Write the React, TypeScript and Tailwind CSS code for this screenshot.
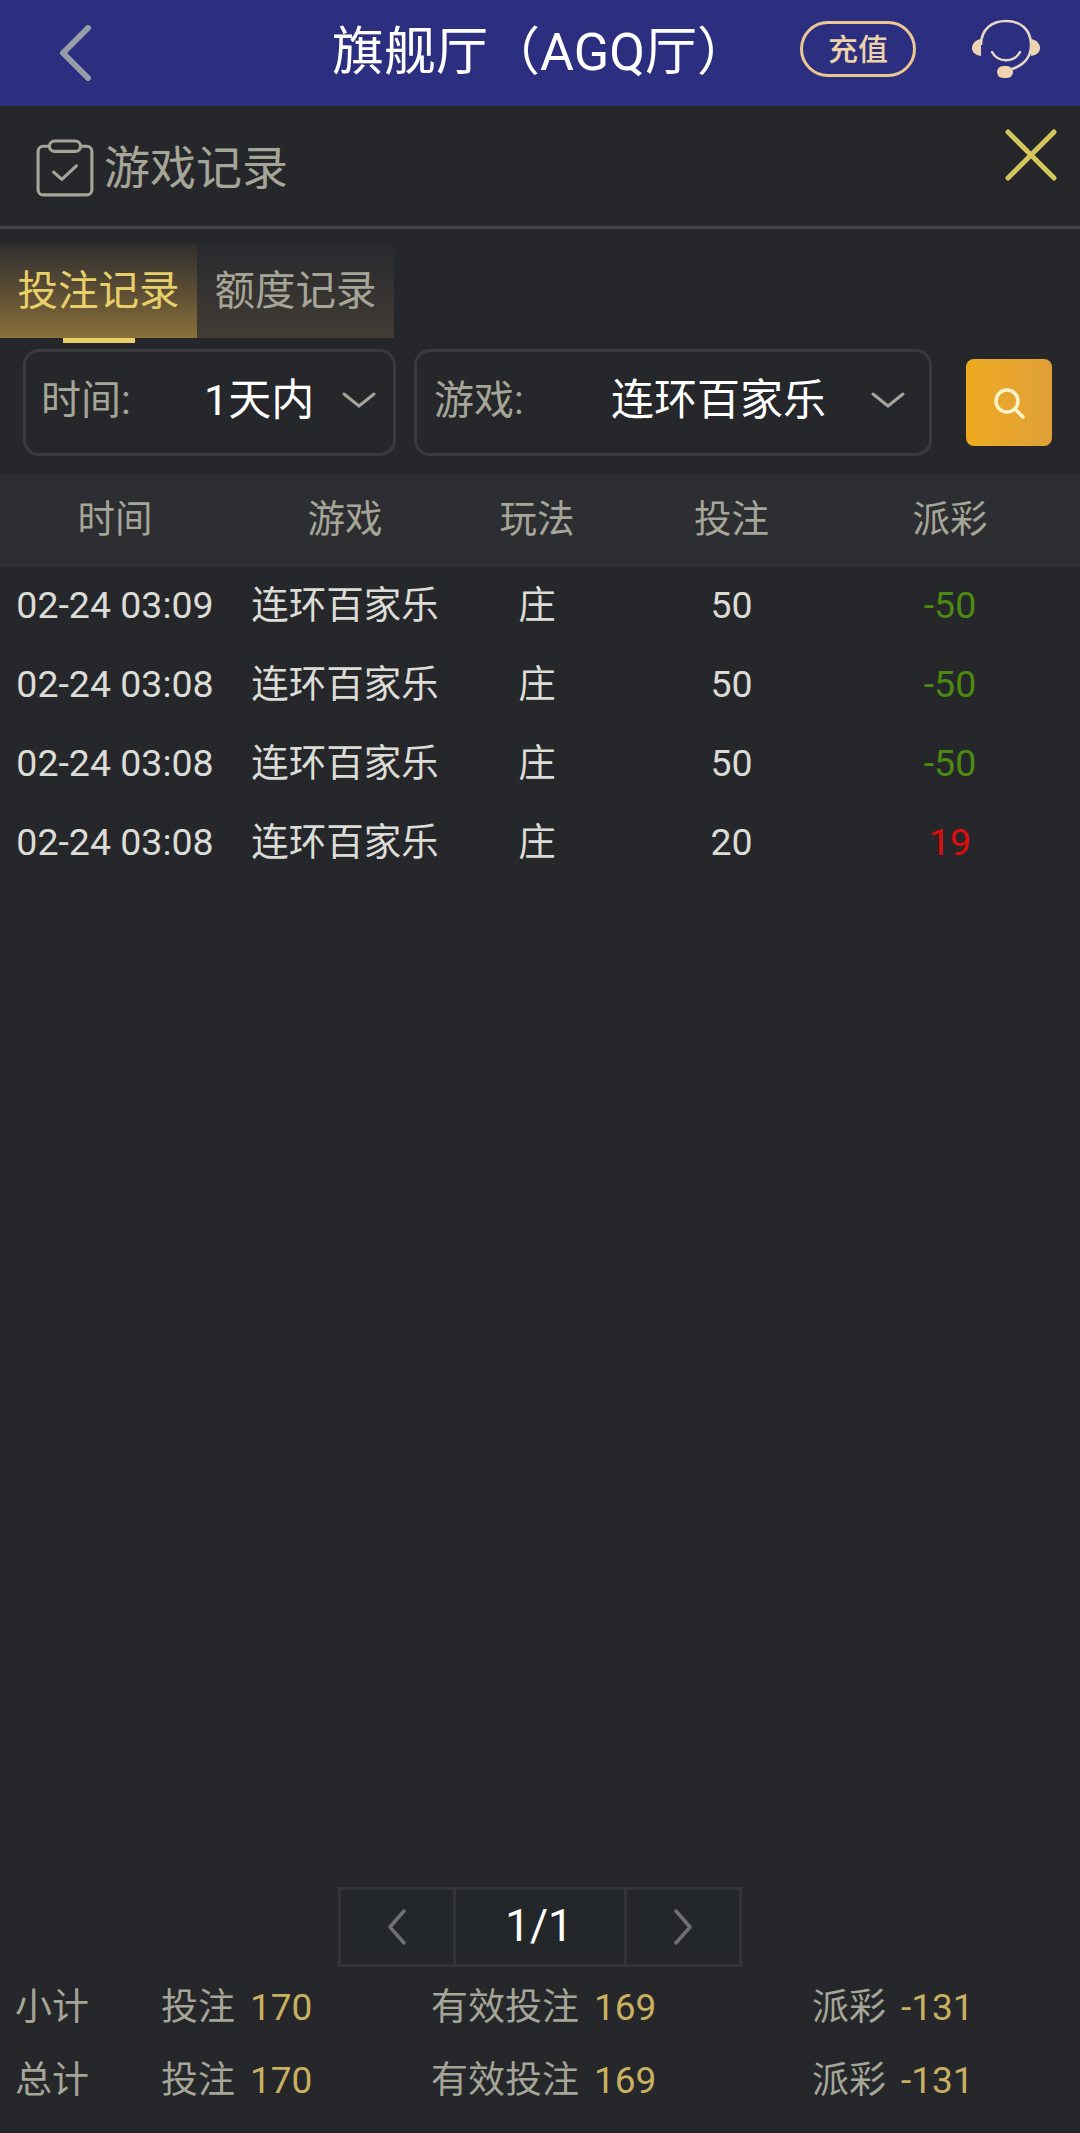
import React from "react";

const rows = [
  { time: "02-24 03:09", bet: "50", payout: "-50", win: false },
  { time: "02-24 03:08", bet: "50", payout: "-50", win: false },
  { time: "02-24 03:08", bet: "50", payout: "-50", win: false },
  { time: "02-24 03:08", bet: "20", payout: "19", win: true },
];

const cols = "grid grid-cols-[230px_230px_154px_235px_202px]";

const totals = ["小计", "总计"];

const Chevron = () => (
  <svg width="36" height="20" viewBox="0 0 36 20" fill="none" stroke="#a5a598" strokeWidth="3" strokeLinecap="round">
    <path d="M3 3 L18 15 L33 3" />
  </svg>
);

const Select = ({ label, value, width, gap }: { label: string; value: string; width: string; gap: string }) => (
  <div className={`flex items-center h-[107px] pb-[4px] border-[3px] border-[#3a3b3e] rounded-[16px] ${width}`}>
    <span className={`text-[40px] text-[#a5a598] ${gap}`}>{label}</span>
    <span className="text-[43px] text-white">{value}</span>
  </div>
);

export default function App() {
  return (
    <div className="flex flex-col w-[1080px] h-[2133px] bg-[#26272b] font-['Roboto','Noto_Sans_CJK_SC',sans-serif] overflow-hidden">
      {/* top bar */}
      <div className="relative flex items-center justify-center h-[106px] bg-[#2c2f80]">
        <svg className="absolute left-[59px] top-[25px]" width="34" height="56" viewBox="0 0 34 56" fill="none" stroke="#969ca8" strokeWidth="6" strokeLinecap="round" strokeLinejoin="round">
          <path d="M29 3 L4 28 L29 53" />
        </svg>
        <span className="text-[52px] leading-none text-white mr-[-1px]">旗舰厅（AGQ厅）</span>
        <div className="absolute left-[800px] top-[21px] flex items-center justify-center w-[116px] h-[56px] rounded-full border-[3px] border-[#edc793] text-[30px] font-medium text-[#eed3a8]">
          充值
        </div>
        <svg className="absolute left-[972px] top-[19px]" width="68" height="62" viewBox="0 0 68 62" fill="none">
          <path d="M9 26 C9 10 20 2 34 2 C48 2 59 10 59 26 C59 38 52 46 40 50" stroke="#e8d8c8" strokeWidth="2.5" />
          <path d="M20 33 C26 44 42 44 48 33" stroke="#e8d8c8" strokeWidth="2.5" strokeLinecap="round" />
          <path d="M9 20 C3 21 0 25 0 29 C0 33 3 36 9 37 Z" fill="#edd3ae" />
          <path d="M59 20 C65 21 68 25 68 29 C68 33 65 36 59 37 Z" fill="#edd3ae" />
          <rect x="25" y="47" width="16" height="12" rx="6" fill="#edd3ae" />
        </svg>
      </div>

      {/* title */}
      <div className="relative flex items-center h-[123px] pl-[36px] pt-[4px] border-b-[3px] border-[#434447]">
        <svg width="59" height="59" viewBox="0 0 57 57" fill="none" stroke="#a5a598" strokeWidth="3">
          <rect x="2" y="7" width="52" height="47" rx="5" />
          <rect x="13" y="2" width="30" height="10" rx="5" fill="#26272b" />
          <path d="M17 32 L25 39 L39 26" strokeLinecap="round" strokeLinejoin="round" />
        </svg>
        <span className="ml-[9px] text-[46px] text-[#a5a598]">游戏记录</span>
        <svg className="absolute left-[1004px] top-[22px]" width="54" height="54" viewBox="0 0 54 54" fill="none" stroke="#d4c65c" strokeWidth="5" strokeLinecap="round">
          <path d="M4 4 L50 50 M50 4 L4 50" />
        </svg>
      </div>

      {/* tabs */}
      <div className="flex mt-[14px] h-[95px]">
        <div className="relative flex items-center justify-center w-[197px] pt-[2px] bg-gradient-to-b from-[#2f2d2c] to-[#8a6f38] text-[40.5px] text-[#e8cf6a]">
          投注记录
          <div className="absolute left-[63px] top-[95px] w-[72px] h-[5px] bg-[#e8cf6a]" />
        </div>
        <div className="flex items-center justify-center w-[197px] pt-[2px] bg-gradient-to-b from-[#28292d] to-[#423c35] text-[40.5px] text-[#a5a598]">
          额度记录
        </div>
      </div>

      {/* filters */}
      <div className="flex items-center mt-[11px] pl-[23px] h-[107px]">
        <div className="relative">
          <Select label="时间:" value="1天内" width="w-[373px]" gap="ml-[15px] w-[163px]" />
          <div className="absolute left-[318px] top-[42px]"><Chevron /></div>
        </div>
        <div className="relative ml-[18px]">
          <Select label="游戏:" value="连环百家乐" width="w-[518px]" gap="ml-[17px] w-[177px]" />
          <div className="absolute left-[456px] top-[42px]"><Chevron /></div>
        </div>
        <div className="flex items-center justify-center ml-[34px] w-[86px] h-[87px] rounded-[8px] bg-gradient-to-r from-[#eeaa1e] to-[#e0a038]">
          <svg width="34" height="34" viewBox="0 0 34 34" fill="none" stroke="#fdf3c8" strokeWidth="3.5" strokeLinecap="round">
            <circle cx="15" cy="15" r="11" />
            <path d="M23 23 L31 31" />
          </svg>
        </div>
      </div>

      {/* table head */}
      <div className={`${cols} items-center h-[93px] mt-[18px] pb-[2px] bg-[#2d2e32] text-[37.5px] text-[#a5a598] text-center`}>
        <span>时间</span>
        <span>游戏</span>
        <span>玩法</span>
        <span>投注</span>
        <span>派彩</span>
      </div>

      {/* rows */}
      <div className="mt-[-1px]">
        {rows.map((row, i) => (
          <div key={i} className={`${cols} items-center h-[79px] text-[37.5px] text-[#dcdcd6] text-center`}>
            <span>{row.time}</span>
            <span>连环百家乐</span>
            <span>庄</span>
            <span>{row.bet}</span>
            <span className={row.win ? "text-[#e00d0d]" : "text-[#4c8a10]"}>{row.payout}</span>
          </div>
        ))}
      </div>

      <div className="flex-1" />

      {/* pager */}
      <div className="flex self-center h-[80px] bg-[#24272a] border-[3px] border-[#323436]">
        <div className="flex items-center justify-center w-[112px]">
          <svg width="18" height="36" viewBox="0 0 18 36" fill="none" stroke="#6e7072" strokeWidth="3.5" strokeLinecap="round" strokeLinejoin="round"><path d="M16 2 L2 18 L16 34" /></svg>
        </div>
        <div className="flex items-center justify-center w-[174px] pr-[2px] pb-[2px] border-x-[3px] border-[#323436] text-[44px] text-white">1/1</div>
        <div className="flex items-center justify-center w-[112px]">
          <svg width="18" height="36" viewBox="0 0 18 36" fill="none" stroke="#6e7072" strokeWidth="3.5" strokeLinecap="round" strokeLinejoin="round"><path d="M2 2 L16 18 L2 34" /></svg>
        </div>
      </div>

      {/* totals */}
      <div className="h-[166px] pt-[4px]">
        {totals.map((t) => (
          <div key={t} className="grid grid-cols-[146px_270px_381px_1fr] items-center h-[73px] pl-[15px] text-[37px] text-[#a5a598]">
            <span>{t}</span>
            <span>投注<span className="ml-[15px] text-[#c8b060]">170</span></span>
            <span>有效投注<span className="ml-[15px] text-[#c8b060]">169</span></span>
            <span>派彩<span className="ml-[15px] text-[#c8b060]">-131</span></span>
          </div>
        ))}
      </div>
    </div>
  );
}
